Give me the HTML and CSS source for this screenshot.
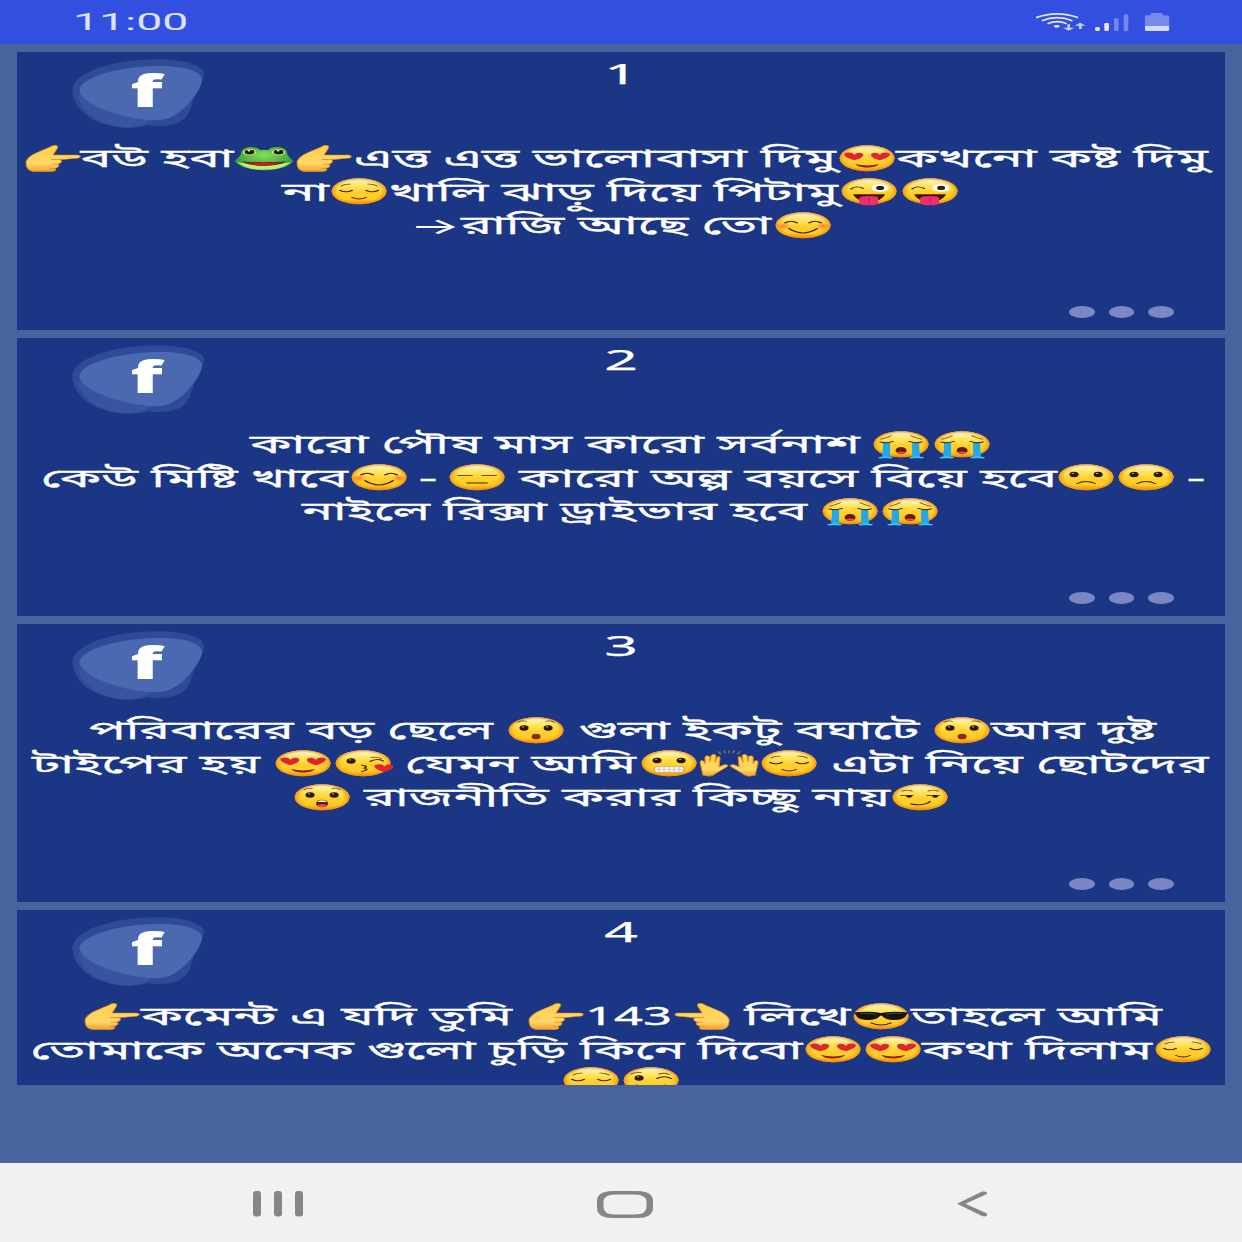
FILE: index.html
```html
<!DOCTYPE html>
<html lang="bn">
<head>
<meta charset="utf-8">
<title>Status list</title>
<link rel="stylesheet" href="styles.css">
</head>
<body>
<svg class="defs" width="0" height="0" aria-hidden="true">
  <defs>
    <linearGradient id="skin" x1="0" y1="0" x2="0" y2="1"><stop offset="0" stop-color="#fffbe6"/><stop offset=".3" stop-color="#ffe45c"/><stop offset=".55" stop-color="#ffd02c"/><stop offset=".8" stop-color="#ffcb2b"/><stop offset="1" stop-color="#f08a00"/></linearGradient>
    <radialGradient id="rim"><stop offset=".8" stop-color="#ff9800" stop-opacity="0"/><stop offset="1" stop-color="#f58a00" stop-opacity=".85"/></radialGradient>
    <linearGradient id="handfill" x1="0" y1="0" x2="0" y2="1"><stop offset="0" stop-color="#ffcf48"/><stop offset=".7" stop-color="#ffd768"/><stop offset="1" stop-color="#f0a02c"/></linearGradient>
    <radialGradient id="frogfill" cx=".5" cy=".35"><stop offset="0" stop-color="#85e058"/><stop offset="1" stop-color="#38a638"/></radialGradient>
    <radialGradient id="blush"><stop offset="0" stop-color="#ff6a3c" stop-opacity=".9"/><stop offset="1" stop-color="#ff8a3c" stop-opacity="0"/></radialGradient>
    <g id="face"><circle cx="30" cy="30" r="27.3" fill="url(#skin)"/><circle cx="30" cy="30" r="27.3" fill="url(#rim)"/></g>
    <path id="heart" d="M0 8C-12 1-12-8-5-8-2-8 0-6 0-3 1-6 4-9 7-7 12-4 8 5 0 8Z" fill="#dc2632"/>
    <g id="eye"><ellipse rx="4.500" ry="5.800" fill="#2c1400"/><circle cx="-1" cy="-2" r="1.300" fill="#b89a6a"/></g>
    <symbol id="point" viewBox="0 0 60 60" preserveAspectRatio="none">
      <path d="M3 37C6 20 20 14 28 5 32 0 36 3 34 10L30 23H54C58 23 58 29 54 30L37 33C40 36 38 40 35 42 37 46 35 50 32 51 34 56 31 58 26 58H12C4 57 3 48 3 37Z" fill="url(#handfill)" stroke="#d9851a" stroke-width="1"/>
      <path d="M37 33H28M35 42H29M32 51H27" stroke="#d9851a" stroke-width="1.600" fill="none"/>
    </symbol>
    <symbol id="frog" viewBox="0 0 60 60" preserveAspectRatio="none">
      <path d="M1 36C3 30 7 26 7 19 8 4 22 3 26 13Q30 11 34 13C38 3 52 4 53 19 53 26 57 30 59 36 54 49 43 55 30 55S6 49 1 36Z" fill="url(#frogfill)"/>
      <path d="M3 38C14 45 46 45 57 38 50 50 42 54 30 54S10 50 3 38Z" fill="#c4ec72"/>
      <path d="M10 38C22 39 38 39 50 38 42 47 18 47 10 38Z" fill="#d91c1c" stroke="#5c1608" stroke-width="1.500"/>
      <circle cx="15.500" cy="17" r="6.500" fill="#ffe08c"/><circle cx="44.500" cy="17" r="6.500" fill="#ffe08c"/><circle cx="15.500" cy="17" r="5" fill="#102010"/><circle cx="44.500" cy="17" r="5" fill="#102010"/><circle cx="15" cy="14" r="1.500" fill="#fff"/><circle cx="44" cy="14" r="1.500" fill="#fff"/>
      <circle cx="21" cy="31" r="1.500" fill="#9aa89a"/><circle cx="39" cy="31" r="1.500" fill="#9aa89a"/>
    </symbol>
    <symbol id="love" viewBox="0 0 60 60" preserveAspectRatio="none">
      <use href="#face"/><use href="#heart" x="17" y="26"/><use href="#heart" transform="translate(43 26) scale(-1 1)"/>
      <path d="M18 42C26 46 34 46 42 42 38 52 22 52 18 42Z" fill="#8a2410"/>
    </symbol>
    <symbol id="relieved" viewBox="0 0 60 60" preserveAspectRatio="none">
      <use href="#face"/><path d="M11 28Q17 34 23 28M37 28Q43 34 49 28M23 43Q30 49 37 43" class="ink"/><path d="M12 19Q16 14 21 15M39 15Q44 14 48 19" class="brow"/>
    </symbol>
    <symbol id="zany" viewBox="0 0 60 60" preserveAspectRatio="none">
      <use href="#face"/><path d="M12 25Q17 17 24 24" class="ink"/><ellipse cx="41" cy="23" rx="8.500" ry="8" fill="#fff"/><ellipse cx="41" cy="23" rx="4" ry="4.500" fill="#222"/>
      <path d="M14 36H46Q43 51 30 51T14 36Z" fill="#45140a"/><path d="M20 45Q21 40 30 40T39 45V53Q39 60 30 60T20 53Z" fill="#ee2f6e"/><path d="M30 43V53" stroke="#c0164c"/>
    </symbol>
    <symbol id="smile" viewBox="0 0 60 60" preserveAspectRatio="none">
      <use href="#face"/><circle cx="10" cy="32" r="8" fill="url(#blush)"/><circle cx="50" cy="32" r="8" fill="url(#blush)"/>
      <path d="M12 25Q18 18 24 25M36 25Q42 18 48 25M16 37Q30 55 44 37" class="ink"/>
    </symbol>
    <symbol id="cry" viewBox="0 0 60 60" preserveAspectRatio="none">
      <use href="#face"/><path d="M12 26H19V57H11Q12 40 12 26ZM41 26H48Q48 40 49 57H41Z" fill="#1fa9ec"/><path d="M8 59Q14 56 21 59M39 59Q46 56 52 59" stroke="#45c5f5" stroke-width="4" fill="none"/>
      <path d="M9 25Q15 29 22 24M38 24Q45 29 51 25" class="ink"/><path d="M10 19Q15 17 20 12M40 12Q45 17 50 19" class="brow"/><ellipse cx="30" cy="43" rx="5.500" ry="7.500" fill="#6c170b"/><path d="M25.500 47Q30 43 34.500 47 30 53 25.500 47Z" fill="#dd5360"/>
    </symbol>
    <symbol id="flat" viewBox="0 0 60 60" preserveAspectRatio="none">
      <use href="#face"/><path d="M11 26H25M35 26H49M20 42H40" class="ink"/>
    </symbol>
    <symbol id="confused" viewBox="0 0 60 60" preserveAspectRatio="none">
      <use href="#face"/><use href="#eye" x="18" y="24"/><use href="#eye" x="42" y="24"/><path d="M21 43Q30 35 39 43" class="ink"/>
    </symbol>
    <symbol id="hushed" viewBox="0 0 60 60" preserveAspectRatio="none">
      <use href="#face"/><use href="#eye" x="18" y="25"/><use href="#eye" x="42" y="25"/><path d="M12 13Q16 9 20 11M40 11Q44 9 48 13" class="brow"/><ellipse cx="30" cy="43" rx="4.500" ry="6" fill="#8a2d14"/>
    </symbol>
    <symbol id="gasp" viewBox="0 0 60 60" preserveAspectRatio="none">
      <use href="#face"/><use href="#eye" x="18" y="25"/><use href="#eye" x="42" y="25"/><path d="M12 14Q16 9 20 12M40 12Q44 9 48 14" class="brow"/><ellipse cx="30" cy="43" rx="6" ry="8" fill="#6c170b"/><path d="M26 38Q30 34 34 38V40H26Z" fill="#fff"/><path d="M25 47Q30 42 35 47 30 54 25 47Z" fill="#dd5360"/>
    </symbol>
    <symbol id="kiss" viewBox="0 0 60 60" preserveAspectRatio="none">
      <use href="#face"/><use href="#eye" x="18" y="25"/><path d="M37 26Q43 19 50 25" class="ink"/><path d="M38 18Q44 15 48 20" class="brow"/><path d="M29 34Q36 36 31 40 37 43 29 47" class="ink"/><use href="#heart" x="51" y="40"/>
    </symbol>
    <symbol id="grimace" viewBox="0 0 60 60" preserveAspectRatio="none">
      <use href="#face"/><use href="#eye" x="18" y="24"/><use href="#eye" x="42" y="24"/><rect x="15" y="36" width="30" height="13" rx="5" fill="#f5f5f5" stroke="#a88960"/><path d="M15 42.500H45M20 36V49M25 36V49M30 36V49M35 36V49M40 36V49" stroke="#c4c0b8"/>
    </symbol>
    <symbol id="hands" viewBox="0 0 60 60" preserveAspectRatio="none">
      <g id="palm"><path d="M3 46 1 28Q2 21 5 26L6 31 6 17Q8 11 11 17V26L12 14Q15 8 17 14L16 28 18 18Q21 13 21 20L20 37 25 33Q30 32 28 37L17 51Q14 57 10 57L4 55Z" fill="url(#handfill)" stroke="#d9851a"/></g><use href="#palm" transform="translate(60) scale(-1 1)"/>
      <path d="M19 5 22 11M25 3 26 9M30 3V9M35 3 34 9M41 5 38 11" stroke="#9a7a4a" stroke-width="1.500"/>
    </symbol>
    <symbol id="smirk" viewBox="0 0 60 60" preserveAspectRatio="none">
      <use href="#face"/><path d="M11 26 23 26M37 26 49 26" class="ink"/><circle cx="19" cy="28" r="3" fill="#2c1400"/><circle cx="45" cy="28" r="3" fill="#2c1400"/><path d="M12 17Q17 13 22 17M38 17Q43 13 48 17" class="brow"/><path d="M21 44Q34 49 40 39" class="ink"/>
    </symbol>
    <symbol id="cool" viewBox="0 0 60 60" preserveAspectRatio="none">
      <use href="#face"/><path d="M3 22Q17 18 30 23 43 18 57 22L55 28Q53 38 43 38 34 38 31 29H29Q26 38 17 38 7 38 5 28Z" fill="#16120f"/><path d="M9 24Q17 22 25 26M35 26Q43 22 51 24" stroke="#555" stroke-width="1.500" fill="none"/><path d="M20 44Q30 53 40 44" class="ink"/>
    </symbol>
    <symbol id="wink" viewBox="0 0 60 60" preserveAspectRatio="none">
      <use href="#face"/><use href="#eye" x="18" y="25"/><path d="M36 26Q43 19 50 26M16 40Q30 54 44 40" class="ink"/><path d="M10 17Q15 12 20 14M38 17Q43 13 48 18" class="brow"/>
    </symbol>
    <symbol id="logo" viewBox="36 20 400 220">
      <path d="M37 120C38 68 150 28 290 27 370 26 435 46 432 72 428 92 424 105 410 130 390 155 400 190 360 215 320 232 280 227 262 224 250 232 210 233 175 229 90 222 38 170 37 120Z" fill="#2f4a97"/>
      <path d="M54 132C60 190 130 232 205 232 235 231 257 222 273 210Z" fill="#38539f"/>
      <path d="M58 120C60 85 160 50 290 47 380 45 428 65 426 90 423 115 405 135 388 157 358 190 325 212 280 210 175 205 60 158 58 120Z" fill="#4b69b1"/>
      <text class="logo-f" x="0" y="0" transform="translate(211 171) scale(2.05 1)" textLength="47.500" lengthAdjust="spacingAndGlyphs">f</text>
    </symbol>
  </defs>
</svg>

<div class="phone">
  <header class="status">
    <span class="clock">11:00</span>
    <svg class="status-icons" viewBox="100 30 420 70" fill="none">
      <path d="M109 53Q172 30 235 53M126 62Q172 44 218 62M143 71Q172 59 201 71" stroke="#e2e6fb" stroke-width="5"/>
      <ellipse cx="171" cy="79" rx="9" ry="4" fill="#e2e6fb"/>
      <path d="M203 73H211V83H223L207 92 190 83H203ZM238 87H246V77H258L241 68 225 77H238Z" fill="#c9d0f7"/>
      <rect x="286" y="81" width="15" height="12" rx="5" fill="#e2e6fb"/><rect x="314" y="69" width="14" height="24" rx="4" fill="#e2e6fb"/><rect x="343" y="55" width="14" height="38" rx="4" fill="#7287e9"/><rect x="372" y="43" width="14" height="50" rx="4" fill="#7287e9"/>
      <path d="M436 78V50Q436 46 444 46H453V39H489V46H501Q509 46 509 50V78Z" fill="#7889ea"/><path d="M436 78H509V90Q509 93 502 93H443Q436 93 436 90Z" fill="#d3d9fa"/>
    </svg>
  </header>

  <main class="list">
    <article class="card">
      <div class="head"><svg class="logo"><use href="#logo"/></svg><h2 class="num">1</h2></div>
      <div class="body">
        <div class="line">
          <svg class="emo"><use href="#point"/></svg>
          <svg class="run" width="151"><text x="-2.500" y="19" textLength="153" lengthAdjust="spacingAndGlyphs">বউ হবা</text></svg>
          <svg class="emo"><use href="#frog"/></svg><svg class="emo"><use href="#point"/></svg>
          <svg class="run" width="483"><text x="0" y="19" textLength="482" lengthAdjust="spacingAndGlyphs">এত্ত এত্ত ভালোবাসা দিমু</text></svg>
          <svg class="emo"><use href="#love"/></svg>
          <svg class="run" width="322"><text x="-1" y="19" textLength="312" lengthAdjust="spacingAndGlyphs">কখনো কষ্ট দিমু</text></svg>
        </div>
        <div class="line">
          <svg class="run" width="46.500"><text x="0" y="19" textLength="47" lengthAdjust="spacingAndGlyphs">না</text></svg>
          <svg class="emo"><use href="#relieved"/></svg>
          <svg class="run" width="450.400"><text x="0" y="19" textLength="449" lengthAdjust="spacingAndGlyphs">খালি ঝাড়ু দিয়ে পিটামু</text></svg>
          <svg class="emo"><use href="#zany"/></svg><svg class="emo"><use href="#zany"/></svg>
        </div>
        <div class="line">
          <svg class="run" width="53"><text class="arrow" x="1.500" y="19" textLength="51" lengthAdjust="spacingAndGlyphs">→</text></svg>
          <svg class="run" width="312"><text x="0" y="19" textLength="310" lengthAdjust="spacingAndGlyphs">রাজি আছে তো</text></svg>
          <svg class="emo"><use href="#smile"/></svg>
        </div>
      </div>
      <div class="more"><i></i><i></i><i></i></div>
    </article>

    <article class="card">
      <div class="head"><svg class="logo"><use href="#logo"/></svg><h2 class="num">2</h2></div>
      <div class="body">
        <div class="line">
          <svg class="run" width="621"><text x="0" y="19" textLength="610" lengthAdjust="spacingAndGlyphs">কারো পৌষ মাস কারো সর্বনাশ</text></svg>
          <svg class="emo"><use href="#cry"/></svg><svg class="emo"><use href="#cry"/></svg>
        </div>
        <div class="line">
          <svg class="run" width="308.600"><text x="1" y="19" textLength="307" lengthAdjust="spacingAndGlyphs">কেউ মিষ্টি খাবে</text></svg>
          <svg class="emo"><use href="#smile"/></svg>
          <svg class="run" width="38.200"><text x="9.500" y="19" textLength="19" lengthAdjust="spacingAndGlyphs">-</text></svg>
          <svg class="emo"><use href="#flat"/></svg>
          <svg class="run" width="549"><text x="12" y="19" textLength="538" lengthAdjust="spacingAndGlyphs">কারো অল্প বয়সে বিয়ে হবে</text></svg>
          <svg class="emo"><use href="#confused"/></svg><svg class="emo"><use href="#confused"/></svg>
          <svg class="run" width="25.400"><text x="9.500" y="19" textLength="19" lengthAdjust="spacingAndGlyphs">-</text></svg>
        </div>
        <div class="line">
          <svg class="run" width="518.400"><text x="0" y="19" textLength="505" lengthAdjust="spacingAndGlyphs">নাইলে রিক্সা ড্রাইভার হবে</text></svg>
          <svg class="emo"><use href="#cry"/></svg><svg class="emo"><use href="#cry"/></svg>
        </div>
      </div>
      <div class="more"><i></i><i></i><i></i></div>
    </article>

    <article class="card">
      <div class="head"><svg class="logo"><use href="#logo"/></svg><h2 class="num">3</h2></div>
      <div class="body">
        <div class="line">
          <svg class="run" width="419.600"><text x="3" y="19" textLength="404" lengthAdjust="spacingAndGlyphs">পরিবারের বড় ছেলে</text></svg>
          <svg class="emo"><use href="#hushed"/></svg>
          <svg class="run" width="366.200"><text x="12.500" y="19" textLength="341" lengthAdjust="spacingAndGlyphs">গুলা ইকটু বঘাটে</text></svg>
          <svg class="emo"><use href="#hushed"/></svg>
          <svg class="run" width="164"><text x="-1" y="19" textLength="165" lengthAdjust="spacingAndGlyphs">আর দুষ্ট</text></svg>
        </div>
        <div class="line">
          <svg class="run" width="241"><text x="0" y="19" textLength="228" lengthAdjust="spacingAndGlyphs">টাইপের হয়</text></svg>
          <svg class="emo"><use href="#love"/></svg><svg class="emo"><use href="#kiss"/></svg>
          <svg class="run" width="245.200"><text x="12" y="19" textLength="231" lengthAdjust="spacingAndGlyphs">যেমন আমি</text></svg>
          <svg class="emo"><use href="#grimace"/></svg><svg class="emo"><use href="#hands"/></svg><svg class="emo"><use href="#relieved"/></svg>
          <svg class="run" width="390.800"><text x="12.500" y="19" textLength="377" lengthAdjust="spacingAndGlyphs">এটা নিয়ে ছোটদের</text></svg>
        </div>
        <div class="line">
          <svg class="emo"><use href="#gasp"/></svg>
          <svg class="run" width="538.400"><text x="12" y="19" textLength="526" lengthAdjust="spacingAndGlyphs">রাজনীতি করার কিচ্ছু নায়</text></svg>
          <svg class="emo"><use href="#smirk"/></svg>
        </div>
      </div>
      <div class="more"><i></i><i></i><i></i></div>
    </article>

    <article class="card">
      <div class="head"><svg class="logo"><use href="#logo"/></svg><h2 class="num">4</h2></div>
      <div class="body">
        <div class="line">
          <svg class="emo"><use href="#point"/></svg>
          <svg class="run" width="383.800"><text x="-1" y="19" textLength="371" lengthAdjust="spacingAndGlyphs">কমেন্ট এ যদি তুমি</text></svg>
          <svg class="emo"><use href="#point"/></svg>
          <svg class="run" width="85.800"><text x="-1" y="19" textLength="87" lengthAdjust="spacingAndGlyphs">143</text></svg>
          <svg class="emo flip"><use href="#point"/></svg>
          <svg class="run" width="118.800"><text x="12.500" y="19" textLength="106" lengthAdjust="spacingAndGlyphs">লিখে</text></svg>
          <svg class="emo"><use href="#cool"/></svg>
          <svg class="run" width="248.800"><text x="0" y="19" textLength="251" lengthAdjust="spacingAndGlyphs">তাহলে আমি</text></svg>
        </div>
        <div class="line">
          <svg class="run" width="773.800"><text x="1.500" y="19" textLength="772" lengthAdjust="spacingAndGlyphs">তোমাকে অনেক গুলো চুড়ি কিনে দিবো</text></svg>
          <svg class="emo"><use href="#love"/></svg><svg class="emo"><use href="#love"/></svg>
          <svg class="run" width="229.200"><text x="-1" y="19" textLength="230" lengthAdjust="spacingAndGlyphs">কথা দিলাম</text></svg>
          <svg class="emo"><use href="#relieved"/></svg>
        </div>
        <div class="line emoji-only">
          <svg class="emo"><use href="#relieved"/></svg><svg class="emo"><use href="#wink"/></svg>
        </div>
      </div>
      <div class="more"><i></i><i></i><i></i></div>
    </article>
  </main>

  <nav class="nav">
    <svg class="recent" viewBox="0 0 50 26" fill="#868686"><rect x="0" y="0" width="8" height="25.500" rx="3"/><rect x="21" y="0" width="8" height="25.500" rx="3"/><rect x="42" y="0" width="8" height="25.500" rx="3"/></svg>
    <svg class="home" viewBox="0 0 56 27" fill="#868686" fill-rule="evenodd"><path d="M16 0H40Q56 0 56 10V17Q56 27 40 27H16Q0 27 0 17V10Q0 0 16 0ZM18 3.500Q6.500 3.500 6.500 11V16Q6.500 23.500 18 23.500H38Q49.500 23.500 49.500 16V11Q49.500 3.500 38 3.500Z"/></svg>
    <svg class="back" viewBox="0 0 31 26" fill="#868686"><path d="M0 12.700 25 .5Q28 0 30 1.500L30 3 8.500 12.700 30 22.500V24.500Q28 26 25 25Z"/></svg>
  </nav>
</div>
</body>
</html>
```
FILE: styles.css
```css
* { box-sizing: border-box; }
body { margin: 0; background: #48639e; }
.defs { position: absolute; }
.phone {
  width: 1242px; height: 1242px; display: flex; flex-direction: column; overflow: hidden;
  font-family: "Noto Sans Bengali", "Noto Sans", Roboto, sans-serif; color: #fff;
}
.status {
  flex: none; height: 44px; background: #334fdf;
  display: flex; justify-content: space-between; padding: 0 68.700px 0 73px;
}
.clock {
  font: 24px/45px Roboto, sans-serif; color: #dde2fb;
  transform: scaleX(1.93); transform-origin: 0 50%;
}
.status-icons { width: 140px; height: 23.300px; margin-top: 10px; }
.list {
  flex: none; height: 1041px; padding: 8px 17px 0; overflow: hidden;
  display: flex; flex-direction: column; gap: 8px;
}
.card { flex: none; height: 278px; background: #1b3685; display: flex; flex-direction: column; }
.head { height: 89.500px; display: grid; grid-template-columns: 1fr auto 1fr; }
.logo { width: 133.300px; height: 73.300px; margin: 4.700px 0 0 55px; }
.logo-f { font: 900 130px "Noto Sans", sans-serif; fill: #fff; }
.num {
  margin: 0; height: 42px; font: 400 28px/42px "Noto Sans", sans-serif;
  transform: scaleX(2.1); -webkit-text-stroke: .25px #fff;
}
.body { height: 160px; }
.line { height: 33.600px; display: flex; justify-content: center; align-items: center; }
.emoji-only { height: 28px; }
.run { flex: none; height: 20px; overflow: visible; }
.run text { font-size: 25px; fill: #fff; stroke: #fff; stroke-width: .3px; }
.run .arrow { font-family: Inter, sans-serif; font-size: 23px; stroke: none; }
.emo { flex: none; width: 60.200px; height: 28.600px; margin-top: -1px; overflow: visible; }
.flip { transform: scaleX(-1); }
.ink { fill: none; stroke: #4a2204; stroke-width: 2; stroke-linecap: round; }
.brow { fill: none; stroke: #7a4a10; stroke-width: 1.600; stroke-linecap: round; }
.more { display: flex; justify-content: flex-end; gap: 13.500px; padding: 4.500px 51.500px 0 0; }
.more i { width: 25.700px; height: 12px; border-radius: 50%; background: #7a87c3; }
.nav {
  margin-top: auto; height: 79px; background: #f1f1f1; border-top: 1px solid #f6f6f8;
  display: grid; grid-template-columns: 253px 344px 360px 1fr; padding-top: 27px;
}
.recent { grid-column: 2; width: 50px; height: 26px; }
.home { grid-column: 3; width: 56px; height: 27px; }
.back { grid-column: 4; width: 31px; height: 26px; }
```
